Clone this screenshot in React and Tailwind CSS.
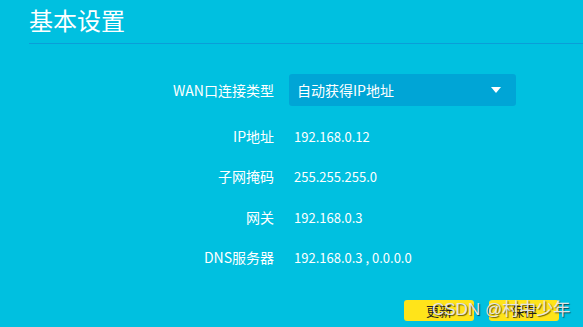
export default function App() {
  const rows = [
    ["IP地址", "192.168.0.12"],
    ["子网掩码", "255.255.255.0"],
    ["网关", "192.168.0.3"],
    ["DNS服务器", "192.168.0.3 , 0.0.0.0"],
  ];
  return (
    <div
      className="relative w-[583px] h-[327px] overflow-hidden bg-[#00c0e0] text-white"
      style={{ fontFamily: '"Noto Sans CJK SC", "Noto Sans", sans-serif' }}
    >
      <div className="pl-[29px] pt-[3px]">
        <h1 className="text-[24px] leading-[34px] h-[40px]">基本设置</h1>
        <div className="h-px bg-[#0a9ed8]" />
      </div>
      <div className="mt-[30px]">
        <div className="flex items-center h-[32px] mb-[10px]">
          <div className="w-[274px] text-right text-[14px]">WAN口连接类型</div>
          <div className="ml-[15px] w-[227px] h-[32px] rounded-[3px] bg-[#00a5d6] flex items-center justify-between pl-[8px] pr-[15px] text-[14px]">
            <span>自动获得IP地址</span>
            <svg width="10" height="6" viewBox="0 0 10 6">
              <path d="M0 0 L10 0 L5 6 Z" fill="white" />
            </svg>
          </div>
        </div>
        {rows.map(([k, v]) => (
          <div key={k} className="flex items-center h-[40.5px]">
            <div className="w-[274px] text-right text-[14px]">{k}</div>
            <div className="ml-[20px] text-[13px]">{v}</div>
          </div>
        ))}
      </div>
      <div className="absolute left-[404px] top-[300px] flex gap-[15px]">
        <button className="w-[70px] h-[21px] rounded-[3px] bg-[#ffe41a] text-[#222] text-[13px] leading-[21px]">更新</button>
        <button className="w-[70px] h-[21px] rounded-[3px] bg-[#ffe41a] text-[#222] text-[13px] leading-[21px]">保存</button>
      </div>
      <div
        className="absolute left-[432px] top-[297px] text-[17px] text-[#e4e4e4] whitespace-nowrap"
        style={{ textShadow: "1px 1px 1px rgba(0,0,0,0.6)", fontFamily: '"Liberation Sans", "Noto Sans CJK SC", sans-serif' }}
      >
        CSDN @村中少年
      </div>
    </div>
  );
}
